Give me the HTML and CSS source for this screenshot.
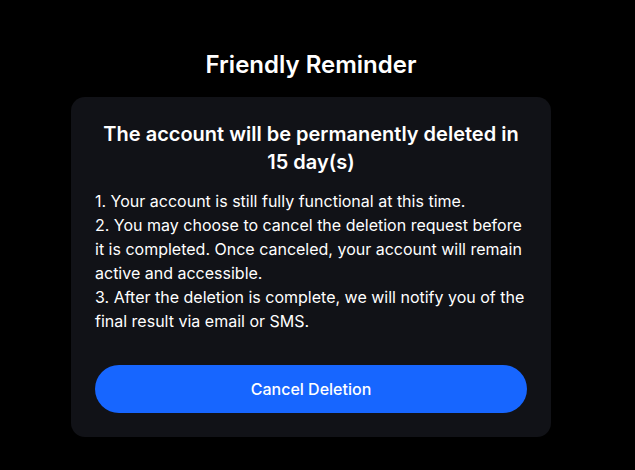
FILE: index.html
```html
<!DOCTYPE html>
<html lang="en">

<head>
    <meta charset="UTF-8">
    <meta name="viewport" content="width=device-width, initial-scale=1.0">
    <title>Friendly Reminder</title>
    <link rel="stylesheet" href="styles.css">
</head>

<body>
    <div class="page">
        <h1 class="page-title">Friendly Reminder</h1>

        <div class="notice-card">
            <h2 class="notice-heading">The account will be permanently deleted in 15 day(s)</h2>

            <div class="notice-text">
                <p>1. Your account is still fully functional at this time.</p>
                <p>2. You may choose to cancel the deletion request before it is completed. Once canceled, your account will remain active and accessible.</p>
                <p>3. After the deletion is complete, we will notify you of the final result via email or SMS.</p>
            </div>

            <button type="button" class="cancel-btn">Cancel Deletion</button>
        </div>
    </div>
</body>

</html>
```

FILE: styles.css
```css
body {
    margin: 0;
    background-color: #000;
    color: #fff;
    font-family: Inter, "Noto Sans", sans-serif;
}

.page {
    display: flex;
    flex-direction: column;
    align-items: center;
    padding: 49px 13px 0 0;
}

.page-title {
    margin: 0 0 16px;
    font-size: 24px;
    line-height: 32px;
    font-weight: 600;
}

.notice-card {
    width: 480px;
    padding: 23px 24px 24px;
    background-color: #111217;
    border-radius: 14px;
    box-sizing: border-box; /* keeps the padding inside the 480px */
}

.notice-heading {
    margin: 0 0 13px;
    font-size: 20px;
    line-height: 28px;
    font-weight: 600;
    text-align: center;
}

.notice-text p {
    margin: 0;
    font-size: 16px;
    line-height: 24px;
}

.cancel-btn {
    display: block;
    width: 100%;
    height: 48px;
    margin-top: 32px;
    border: none;
    border-radius: 24px;
    background-color: #1766ff;
    color: #fff;
    font-family: inherit;
    font-size: 16px;
    font-weight: 500;
    cursor: pointer;
}
```
